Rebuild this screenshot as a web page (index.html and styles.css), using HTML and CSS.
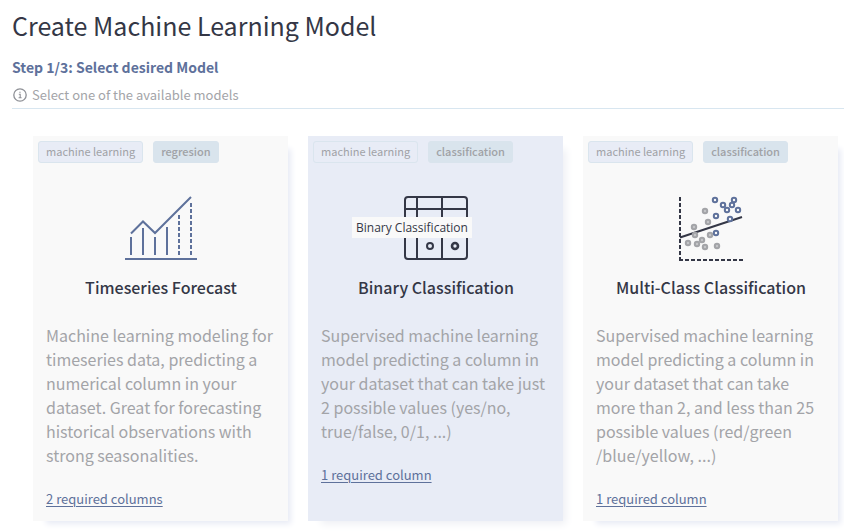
FILE: index.html
```html
<!DOCTYPE html>
<html lang="en">
<head>
<meta charset="utf-8">
<meta name="viewport" content="width=device-width, initial-scale=1">
<title>Create Machine Learning Model</title>
<link rel="stylesheet" href="styles.css">
</head>
<body>
<header class="header">
  <h1 class="title">Create Machine Learning Model</h1>
  <h2 class="step">Step 1/3: Select desired Model</h2>
  <p class="hint">
    <svg class="hint-icon" viewBox="0 0 14 14" aria-hidden="true">
      <circle cx="7" cy="7" r="6.2" fill="none" stroke="currentColor" stroke-width="1.3"/>
      <path d="M5.8 6.2H7.2V9.6M5.6 9.7H8.6M6.3 4.2H7.6" fill="none" stroke="currentColor" stroke-width="1.1"/>
    </svg>
    Select one of the available models
  </p>
</header>
<main class="models">
  <article class="card">
    <div class="tags"><span class="tag">machine learning</span><span class="tag tag-kind">regresion</span></div>
    <div class="figure">
      <svg class="icon" viewBox="0 0 72 66" aria-hidden="true" fill="none" stroke="#5e719b" stroke-width="2">
        <path d="M0 64H72M6 42V60M18 33V60M30 42V60M42 32V60"/>
        <path d="M6 38.5L18 26.5L30 38L66 2"/>
        <path d="M54 20V60M66 8V60" stroke-dasharray="4 2"/>
      </svg>
    </div>
    <h3 class="name">Timeseries Forecast</h3>
    <p class="description">Machine learning modeling for timeseries data, predicting a numerical column in your dataset. Great for forecasting historical observations with strong seasonalities.</p>
    <a class="required" href="#timeseries">2 required columns</a>
  </article>
  <article class="card card-active">
    <div class="tags"><span class="tag">machine learning</span><span class="tag tag-kind">classification</span></div>
    <div class="figure">
      <svg class="icon" viewBox="0 0 72 66" aria-hidden="true" fill="none" stroke="#343746" stroke-width="2">
        <rect x="5" y="2" width="62" height="62" rx="3"/>
        <path d="M5 14H67M17 2V64M42 2V64"/>
        <circle cx="30" cy="51" r="3"/>
        <circle cx="55" cy="51" r="3" stroke-width="2.6"/>
      </svg>
      <span class="tooltip" role="tooltip">Binary Classification</span>
    </div>
    <h3 class="name">Binary Classification</h3>
    <p class="description">Supervised machine learning model predicting a column in your dataset that can take just 2 possible values (yes/no, true/false, 0/1, ...)</p>
    <a class="required" href="#binary">1 required column</a>
  </article>
  <article class="card">
    <div class="tags"><span class="tag">machine learning</span><span class="tag tag-kind">classification</span></div>
    <div class="figure">
      <svg class="icon" viewBox="0 0 72 66" aria-hidden="true" fill="none" stroke-width="2">
        <path d="M5 2V66M4 65H68" stroke="#343746" stroke-dasharray="4 2"/>
        <path d="M5 42.5L67 22" stroke="#343746"/>
        <g stroke="#a3a4a8" fill="#c4c5c8">
          <circle cx="30" cy="16" r="2.2"/><circle cx="33" cy="27" r="2.2"/><circle cx="19" cy="32" r="2.2"/><circle cx="20" cy="40" r="2.2"/><circle cx="35" cy="40" r="2.2"/><circle cx="27" cy="45" r="2.2"/><circle cx="13" cy="48" r="2.2"/><circle cx="22" cy="49" r="2.2"/><circle cx="30" cy="52" r="2.2"/><circle cx="42" cy="51" r="2.2"/>
        </g>
        <g stroke="#5e719b" fill="#f9f9f9">
          <circle cx="40" cy="5" r="2.2"/><circle cx="59" cy="5" r="2.2"/><circle cx="48" cy="10" r="2.2"/><circle cx="57" cy="10" r="2.2"/><circle cx="52" cy="15" r="2.2"/><circle cx="63" cy="15" r="2.2"/><circle cx="41" cy="21" r="2.2"/><circle cx="55" cy="24" r="2.2"/><circle cx="41" cy="38" r="2.2"/>
        </g>
      </svg>
    </div>
    <h3 class="name">Multi-Class Classification</h3>
    <p class="description">Supervised machine learning model predicting a column in your dataset that can take more than 2, and less than 25 possible values (red/green<wbr>/blue/yellow, ...)</p>
    <a class="required" href="#multiclass">1 required column</a>
  </article>
</main>
</body>
</html>
```
FILE: styles.css
```css
* {
  box-sizing: border-box;
}

body {
  margin: 0;
  background: #fff;
  color: #343746;
  font-family: "Noto Sans CJK SC", "Noto Sans", sans-serif;
}

h1,
h2,
h3,
p {
  margin: 0;
}

.header {
  margin-left: 12px;
  padding-top: 7px;
  border-bottom: 1px solid #d8e6f0;
}

.title {
  font-size: 25px;
  line-height: 36px;
  font-weight: 400;
}

.step {
  margin-top: 12px;
  color: #5e719b;
  font-size: 14px;
  line-height: 24px;
  font-weight: 700;
}

.hint {
  display: flex;
  align-items: center;
  gap: 5px;
  padding: 6px 0 3px 1px;
  color: #a3a4a8;
  font-size: 13px;
  line-height: 20px;
}

.hint-icon {
  width: 14px;
  height: 14px;
  color: #8e9096;
}

.models {
  display: grid;
  grid-template-columns: repeat(3, minmax(0, 1fr));
  gap: 20px;
  padding: 27px 6px 10px 33px;
}

.card {
  padding: 5px 12px 12px 13px;
  background: #f9f9f9;
  box-shadow: 8px 8px 6px -5px #e8ebf5;
}

.card-active {
  background: #e8ecf6;
  box-shadow: 8px 8px 8px -5px #eeeff4;
}

.tags {
  display: flex;
  gap: 10px;
  margin-left: -8px;
}

.tag {
  padding: 0 7px 2px;
  border: 1px solid #dae5ee;
  border-radius: 3px;
  background: #e8ecf6;
  color: #a0a2a6;
  font-size: 11px;
  line-height: 18px;
  font-weight: 400;
  white-space: nowrap;
}

.tag-kind {
  border-color: #d9e4ed;
  background: #d9e4ed;
  font-weight: 500;
}

.figure {
  position: relative;
  display: flex;
  justify-content: center;
  margin-top: 32px;
}

.icon {
  width: 72px;
  height: 66px;
}

.tooltip {
  position: absolute;
  top: 22px;
  left: 31px;
  padding: 1px 4px 0;
  background: #f9f9f9;
  font-family: "Open Sans", "Noto Sans", sans-serif;
  font-size: 12px;
  line-height: 20px;
  white-space: nowrap;
}

.name {
  margin-top: 14px;
  font-size: 16px;
  line-height: 24px;
  font-weight: 500;
  text-align: center;
}

.description {
  margin-top: 24px;
  color: #a3a4a8;
  font-size: 16px;
  line-height: 24px;
}

.required {
  display: inline-block;
  margin-top: 22px;
  color: #5e719b;
  font-size: 13px;
  line-height: 20px;
  text-underline-offset: 2px;
}
```
